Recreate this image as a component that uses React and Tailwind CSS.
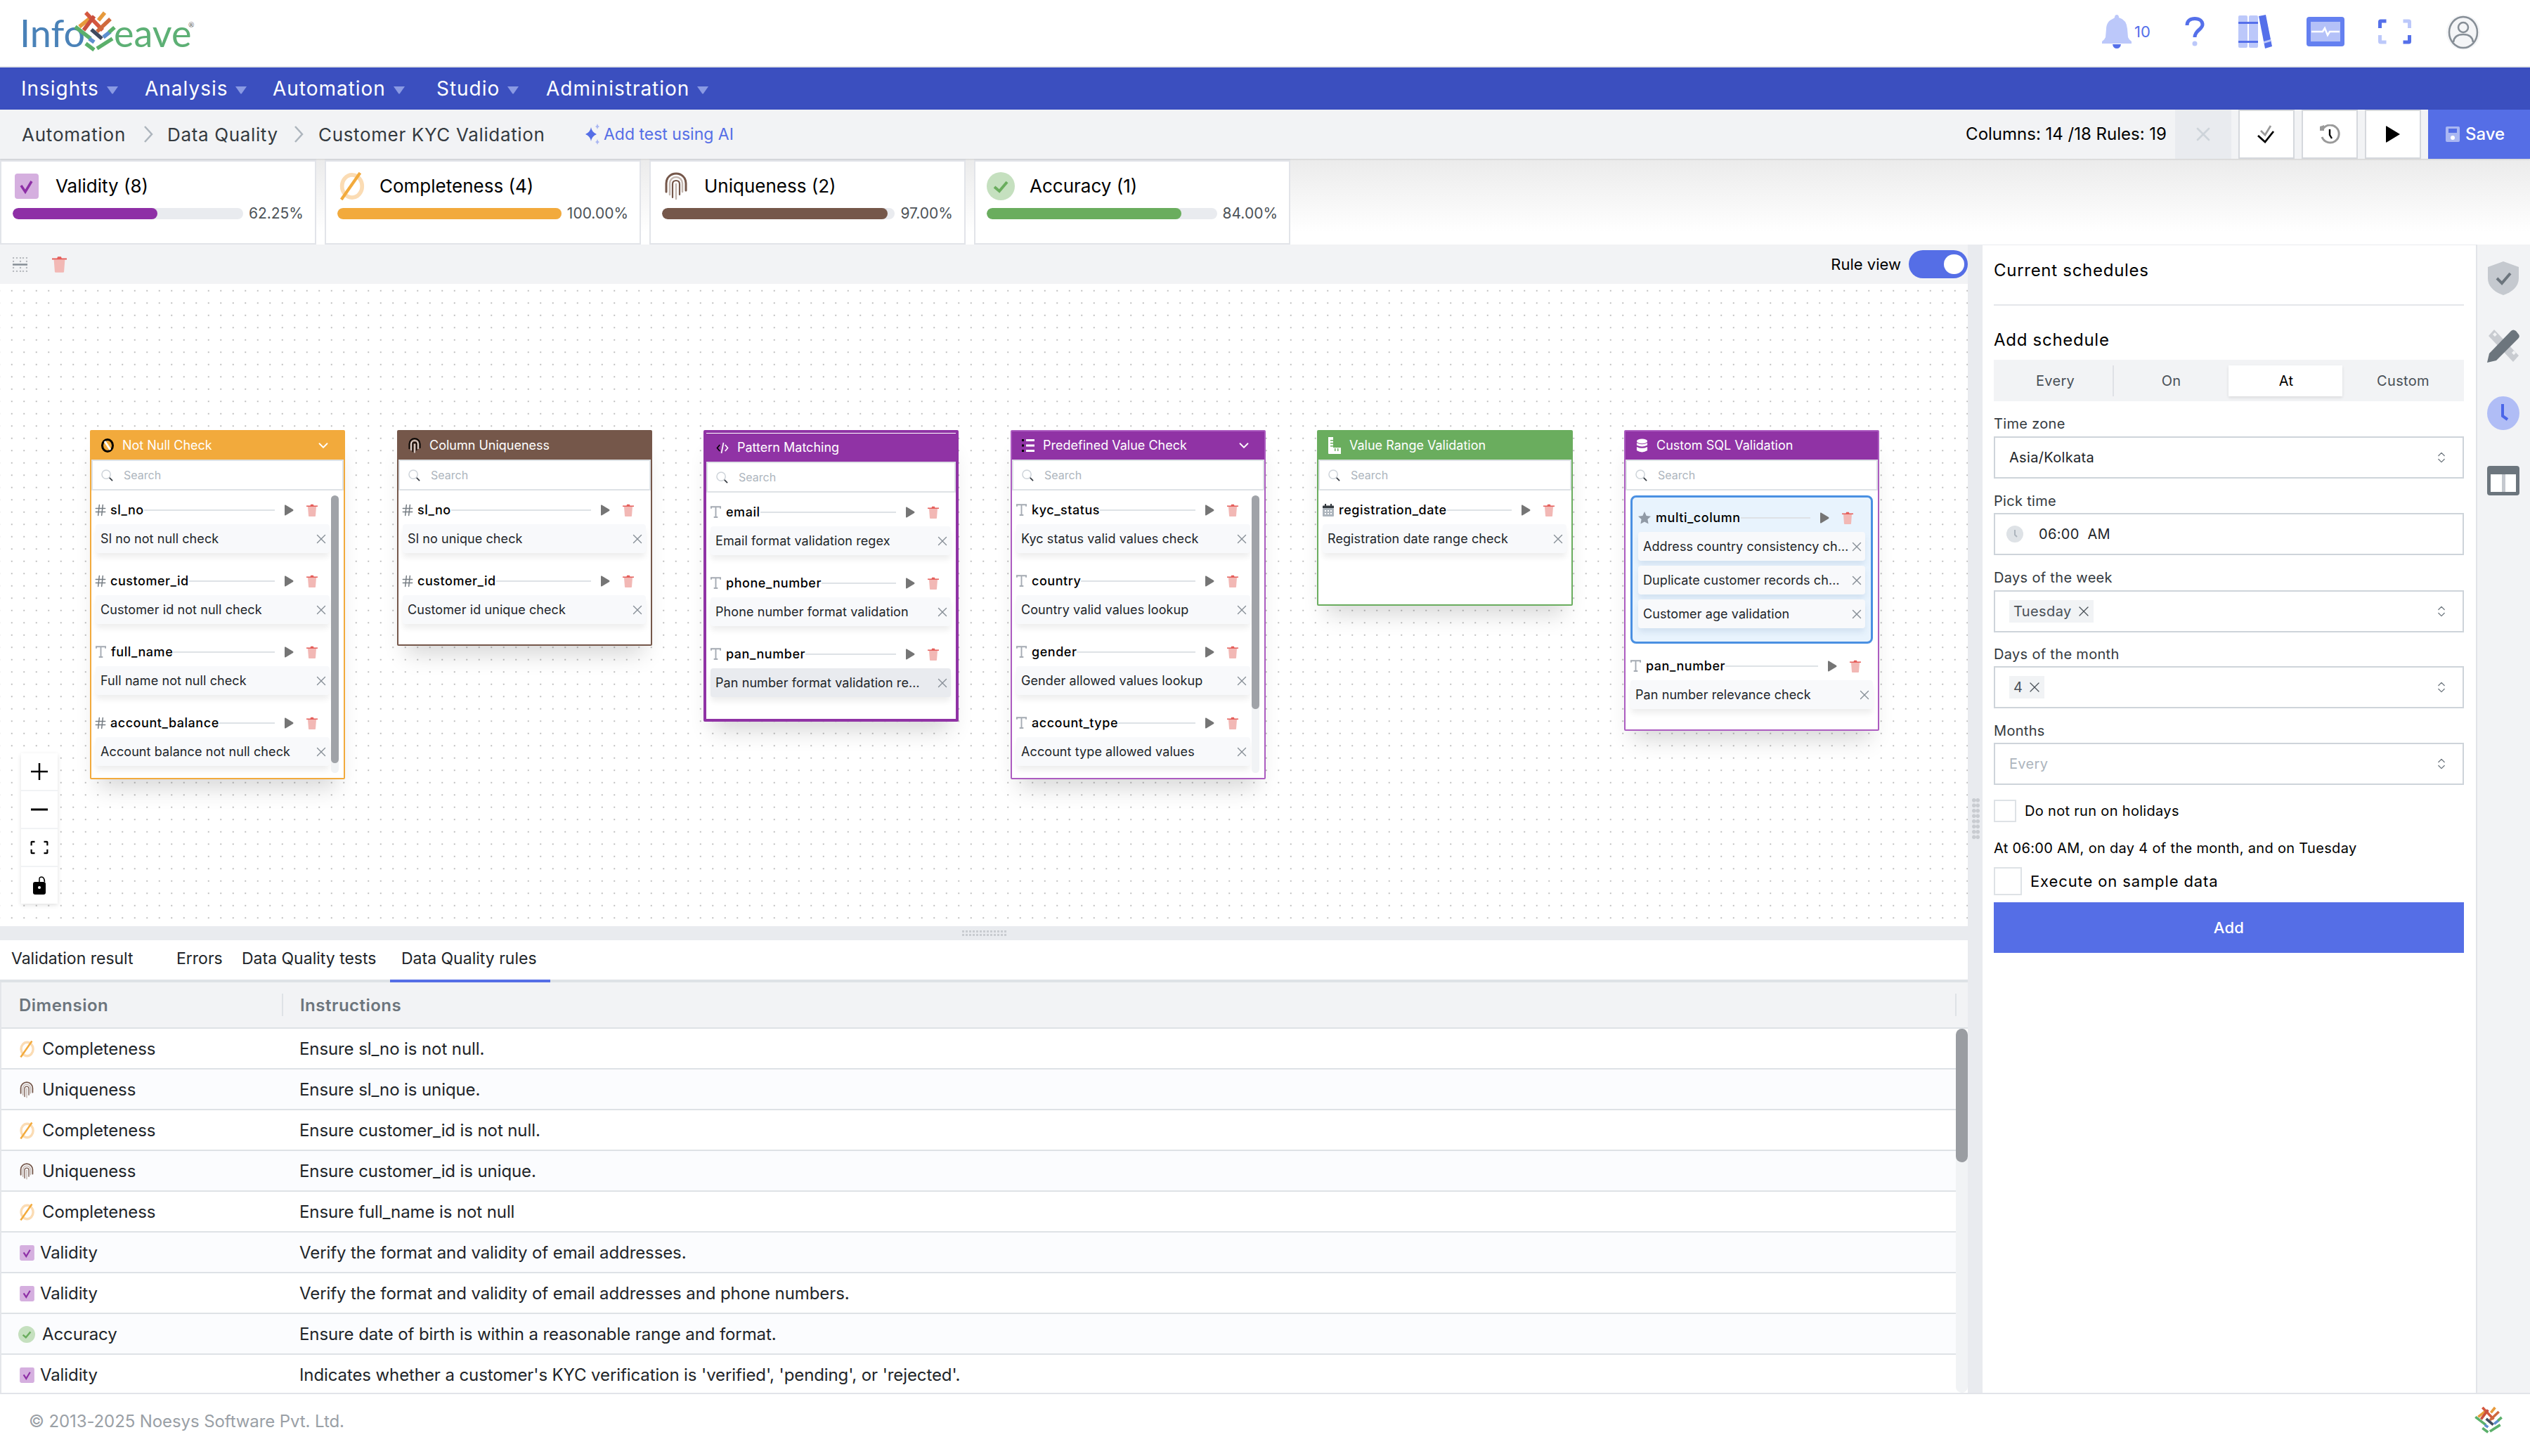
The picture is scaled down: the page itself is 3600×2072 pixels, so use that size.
import { ChevronsUpDown, Hash, X, ChevronDown } from "lucide-react";

// shared colours live in the class names, this app only uses a few
const Trash = ({ className = "w-[16px] h-[18px]" }) => (
  <svg viewBox="0 0 16 18" className={className}>
    <path d="M2 4h12l-1 13.2q0 .8-1 .8H4q-1 0-1-.8z" fill="#f2b8b5" />
    <path d="M0 2.6h5.5L6.2 .8h3.6l.7 1.8H16V4H0z" fill="#e55f5b" />
  </svg>
);

const Play = ({ className = "w-[14px] h-[16px]", color = "#757575" }) => (
  <svg viewBox="0 0 14 16" className={className}>
    <path d="M1 1.2 Q1 0 2.2 .6L13 7q1 1 0 2L2.2 15.4Q1 16 1 14.8z" fill={color} />
  </svg>
);

const LetterT = () => (
  <svg viewBox="0 0 16 18" className="w-[15px] h-[17px] shrink-0" fill="none" stroke="#a5abb3" strokeWidth="2">
    <path d="M1 4V1.2h14V4M8 1.2V17M5 17h6" />
  </svg>
);

const CalendarMini = () => (
  <svg viewBox="0 0 16 18" className="w-[16px] h-[18px] shrink-0">
    <rect x="0" y="6" width="16" height="12" rx="1" fill="#adb5bd" />
    <path d="M0 6V3.5Q0 2.5 1 2.5h2V0h2v2.5h6V0h2v2.5h2q1 0 1 1V6z" fill="#343a40" />
    <path d="M3 9h2v2H3zM7 9h2v2H7zM11 9h2v2h-2zM3 13h2v2H3zM7 13h2v2H7zM11 13h2v2h-2z" fill="#fff" />
  </svg>
);

const Star = () => (
  <svg viewBox="0 0 20 20" className="w-[18px] h-[18px] shrink-0">
    <path d="M10 0l3 6.6 7 .9-5.1 4.8 1.3 7.2L10 16l-6.2 3.5 1.3-7.2L0 7.500l7-.9z" fill="#909aa6" />
  </svg>
);

const SearchIcon = () => (
  <svg viewBox="0 0 18 18" className="w-[17px] h-[17px] shrink-0" fill="none">
    <circle cx="7.500" cy="7.500" r="6.500" stroke="#ced4da" strokeWidth="1.6" />
    <path d="M12.500 12.500L17 17" stroke="#343a40" strokeWidth="1.800" />
  </svg>
);

const Fingerprint = ({ className, outer = "#75574a", inner = "#c4b7b0" }) => (
  <svg viewBox="0 0 32 40" className={className} fill="none" strokeLinecap="round">
    <path d="M2 28V16C2 8 8 2 16 2s14 6 14 14v10" stroke={outer} strokeWidth="3" />
    <path d="M7 32V16c0-5 4-9 9-9s9 4 9 9v12" stroke={inner} strokeWidth="2.500" />
    <path d="M11 36V17c0-3 2-5 5-5s5 2 5 5v15" stroke={outer} strokeWidth="2.200" />
    <path d="M16 38V17" stroke={inner} strokeWidth="2.400" />
  </svg>
);

const NoNull = ({ className }) => (
  <svg viewBox="0 0 40 42" className={className} fill="none">
    <ellipse cx="21" cy="21" rx="15" ry="17" stroke="#fbdcb4" strokeWidth="6" />
    <path d="M33 1L5 41" stroke="#f2aa3c" strokeWidth="4.500" />
  </svg>
);

const CheckBoxDuo = ({ className }) => (
  <svg viewBox="0 0 34 36" className={className}>
    <rect width="34" height="36" rx="4" fill="#d5afdf" />
    <path d="M9 17l6 9 9-15" fill="none" stroke="#8e2fa6" strokeWidth="3.500" />
  </svg>
);

const CircleCheck = ({ className }) => (
  <svg viewBox="0 0 40 40" className={className}>
    <circle cx="20" cy="20" r="20" fill="#c5e0bf" />
    <path d="M11 21l7 6 11-13" fill="none" stroke="#6aad5e" strokeWidth="4" />
  </svg>
);

const Weave = ({ className }) => (
  <svg viewBox="0 0 60 60" className={className} fill="none" strokeWidth="5.500">
    <path d="M23 11L8 23" stroke="#e79a3c" />
    <path d="M44 3L35 14" stroke="#e79a3c" />
    <path d="M17 3L41 28" stroke="#d4573f" />
    <path d="M52 12L33 30" stroke="#cf6a3d" />
    <path d="M29 8L14 28" stroke="#c94f3e" />
    <path d="M2 23L24 40" stroke="#5bb06b" />
    <path d="M25 27L40 40" stroke="#3f4a5e" />
    <path d="M52 30L42 38" stroke="#5d8fcf" />
    <path d="M58 24L50 31" stroke="#5bb06b" />
    <path d="M22 40L29 45" stroke="#5d8fcf" />
    <path d="M17 47L29 56" stroke="#5bb06b" />
    <path d="M55 40L33 54" stroke="#5bb06b" />
  </svg>
);

const Caret = () => (
  <svg viewBox="0 0 18 12" className="w-[18px] h-[12px] mt-[4px]">
    <path d="M1 1h16l-7 10q-1 1-2 0z" fill="#8a9ae3" />
  </svg>
);

const Crumb = () => (
  <svg viewBox="0 0 14 26" className="w-[14px] h-[26px]" fill="none" stroke="#adb5bd" strokeWidth="2.500">
    <path d="M2 2l10 11L2 24" />
  </svg>
);

const FocusCorners = ({ className, a, b, width = 5 }) => (
  <svg viewBox="0 0 48 36" className={className} fill="none" strokeWidth={width}>
    <path d="M3 13V4Q3 3 4 3h8" stroke={a} />
    <path d="M36 3h8q1 0 1 1v9" stroke={b} />
    <path d="M3 23v9q0 1 1 1h8" stroke={b} />
    <path d="M36 33h8q1 0 1-1v-9" stroke={a} />
  </svg>
);

const HeaderIcons = () => (
  <div className="ml-auto h-full relative w-[680px]">
    <svg viewBox="0 0 42 48" className="absolute left-[71px] top-[21px] w-[42px] h-[48px]">
      <path d="M21 0q3 0 3 4 11 3 12 16l1 12q1 3 5 6v3H0v-3q4-3 5-6l1-12C7 7 15 7 18 4q0-4 3-4z" fill="#bcc8fa" />
      <path d="M15 42h12q-1 6-6 6t-6-6z" fill="#5570ea" />
    </svg>
    <span className="absolute left-[117px] top-[32px] text-[22px] leading-[26px] text-[#5570ea]">10</span>
    <svg viewBox="0 0 28 42" className="absolute left-[189px] top-[24px] w-[28px] h-[42px]" fill="none">
      <path d="M3 12C3 5 8 2.500 14 2.500 21 2.500 25 6 25 11 25 18 14 19 14 29" stroke="#5570ea" strokeWidth="5" />
      <circle cx="14" cy="38" r="3.500" fill="#bcc8fa" />
    </svg>
    <svg viewBox="0 0 49 48" className="absolute left-[265px] top-[21px] w-[49px] h-[48px]">
      <rect x="0" y="1" width="13" height="46" rx="2" fill="#bcc8fa" />
      <rect x="15" y="1" width="13" height="46" rx="2" fill="#bcc8fa" />
      <path d="M0 10h28v3H0zM0 37h28v3H0z" fill="#5570ea" />
      <path d="M29 2l10-2 9 45-10 3z" fill="#5570ea" />
      <path d="M36 38l10-3v3l-10 3z" fill="#bcc8fa" />
    </svg>
    <svg viewBox="0 0 54 42" className="absolute left-[362px] top-[24px] w-[54px] h-[42px]">
      <rect width="54" height="42" rx="4" fill="#6480f0" />
      <rect x="6" y="7" width="42" height="28" fill="#b4c1f8" />
      <path d="M7 21h16l3-5 4 10 3-5h14" fill="none" stroke="#fff" strokeWidth="2.500" />
    </svg>
    <FocusCorners className="absolute left-[463px] top-[27px] w-[49px] h-[36px]" a="#5570ea" b="#bcc8fa" />
    <svg viewBox="0 0 48 50" className="absolute left-[561px] top-[21px] w-[48px] h-[50px]" fill="none">
      <ellipse cx="24" cy="25" rx="24" ry="25" fill="#f4f5f7" />
      <ellipse cx="24" cy="25" rx="20" ry="22" stroke="#868e96" strokeWidth="2.500" />
      <circle cx="24" cy="18" r="7" stroke="#868e96" strokeWidth="2.500" />
      <path d="M10 39c1-9 7-11 14-11s13 2 14 11" stroke="#868e96" strokeWidth="2.500" />
    </svg>
  </div>
);

const nav = [
  { label: "Insights", gap: "w-[176px]" },
  { label: "Analysis", gap: "w-[182px]" },
  { label: "Automation", gap: "w-[233px]" },
  { label: "Studio", gap: "w-[156px]" },
  { label: "Administration", gap: "" },
];

const summaries = [
  {
    label: "Validity (8)",
    pct: "62.25%",
    card: "w-[450px]",
    iconBox: <CheckBoxDuo className="w-[34px] h-[36px] ml-[3px]" />,
    fill: "w-[206px] bg-[#8e2fa6]",
    textGap: "ml-[24px]",
  },
  {
    label: "Completeness (4)",
    pct: "100.00%",
    card: "w-[450px]",
    iconBox: <NoNull className="w-[40px] h-[40px]" />,
    fill: "w-[322px] bg-[#f2aa3c]",
    textGap: "ml-[20px]",
  },
  {
    label: "Uniqueness (2)",
    pct: "97.00%",
    card: "w-[450px]",
    iconBox: <Fingerprint className="w-[40px] h-[40px]" />,
    fill: "w-[321px] bg-[#75574a]",
    textGap: "ml-[20px]",
  },
  {
    label: "Accuracy (1)",
    pct: "84.00%",
    card: "w-[450px]",
    iconBox: <CircleCheck className="w-[40px] h-[40px]" />,
    fill: "w-[277px] bg-[#6aad5e]",
    textGap: "ml-[21px]",
  },
];

const SummaryCard = ({ item }) => (
  <div className={`${item.card} h-[122px] bg-white border-2 border-[#e2e4e9] border-t-4 px-[16px] pt-[13px]`}>
    <div className="flex items-center h-[44px]">
      {item.iconBox}
      <span className={`${item.textGap} text-[26px] leading-[32px] text-black`}>{item.label}</span>
    </div>
    <div className="flex items-center mt-[3px]">
      <div className="flex-1 h-[16px] rounded-full bg-[#e9ebef] overflow-hidden">
        <div className={`h-full rounded-full ${item.fill}`} />
      </div>
      <span className="ml-[8px] text-[21px] leading-[28px] text-[#4d5358]">{item.pct}</span>
    </div>
  </div>
);

const hash = <Hash className="w-[20px] h-[20px] -mx-[3px] shrink-0 text-[#757c83]" strokeWidth={1.8} />;
const letter = <LetterT />;

const nodes = [
  {
    pos: "left-[128px] top-[208px] w-[363px] h-[497px]",
    border: "border-2 border-[#f2aa3c]",
    head: "bg-[#f2aa3c]",
    title: "Not Null Check",
    chevron: true,
    scroll: "h-[381px]",
    icon: (
      <svg viewBox="0 0 18 20" className="w-[18px] h-[20px]" fill="none">
        <ellipse cx="9" cy="10" rx="7.500" ry="8.500" stroke="#000" strokeWidth="3" />
        <path d="M5 4l8 12" stroke="#fff" strokeWidth="3" />
      </svg>
    ),
    groups: [
      { icon: hash, name: "sl_no", rules: ["Sl no not null check"] },
      { icon: hash, name: "customer_id", rules: ["Customer id not null check"] },
      { icon: letter, name: "full_name", rules: ["Full name not null check"] },
      { icon: hash, name: "account_balance", rules: ["Account balance not null check"] },
    ],
  },
  {
    pos: "left-[565px] top-[208px] w-[363px] h-[307px]",
    border: "border-2 border-[#75574a]",
    head: "bg-[#75574a]",
    title: "Column Uniqueness",
    icon: <Fingerprint className="w-[18px] h-[22px]" outer="#000" inner="#fff" />,
    groups: [
      { icon: hash, name: "sl_no", rules: ["Sl no unique check"] },
      { icon: hash, name: "customer_id", rules: ["Customer id unique check"] },
    ],
  },
  {
    pos: "left-[1001px] top-[208px] w-[363px] h-[415px]",
    border: "border-4 border-[#9033a5]",
    head: "bg-[#9033a5] mt-[1px]",
    title: "Pattern Matching",
    icon: (
      <svg viewBox="0 0 24 22" className="w-[23px] h-[21px]" fill="none" strokeWidth="2.200">
        <path d="M7 5l-5 6 5 6" stroke="#000" />
        <path d="M14 1L10 21" stroke="#fff" />
        <path d="M17 5l5 6-5 6" stroke="#fff" />
      </svg>
    ),
    groups: [
      { icon: letter, name: "email", rules: ["Email format validation regex"] },
      { icon: letter, name: "phone_number", rules: ["Phone number format validation"] },
      { icon: letter, name: "pan_number", rules: ["Pan number format validation re…"], active: true },
    ],
  },
  {
    pos: "left-[1438px] top-[208px] w-[363px] h-[497px]",
    border: "border-2 border-[#ac5cc0]",
    head: "bg-[#9033a5]",
    title: "Predefined Value Check",
    chevron: true,
    scroll: "h-[304px]",
    icon: (
      <svg viewBox="0 0 18 20" className="w-[18px] h-[20px]">
        <path d="M0 1h3v3H0zM0 8.500h3v3H0zM0 16h3v3H0z" fill="#000" />
        <path d="M6 1h12v3H6zM6 8.500h12v3H6zM6 16h12v3H6z" fill="#fff" />
      </svg>
    ),
    groups: [
      { icon: letter, name: "kyc_status", rules: ["Kyc status valid values check"] },
      { icon: letter, name: "country", rules: ["Country valid values lookup"] },
      { icon: letter, name: "gender", rules: ["Gender allowed values lookup"] },
      { icon: letter, name: "account_type", rules: ["Account type allowed values"] },
    ],
  },
  {
    pos: "left-[1874px] top-[208px] w-[364px] h-[250px]",
    border: "border-2 border-[#6aad5e]",
    head: "bg-[#6aad5e]",
    title: "Value Range Validation",
    icon: (
      <svg viewBox="0 0 18 26" className="w-[18px] h-[26px]">
        <path d="M0 1h7v15h11v9H1q-1 0-1-1z" fill="#fff" />
        <path d="M3 5h4v1.500H3zM3 9h4v1.500H3zM3 13h4v1.500H3zM9 17v4h1.500v-4zM13 17v4h1.500v-4z" fill="#6aad5e" />
      </svg>
    ),
    groups: [{ icon: <CalendarMini />, name: "registration_date", rules: ["Registration date range check"] }],
  },
];

const ColumnRow = ({ icon, name }) => (
  <div className="flex items-center h-[41px] pr-[17px]">
    {icon}
    <span className="ml-[7px] text-[18px] font-medium text-black whitespace-nowrap tracking-[0.03em]">{name}</span>
    <div className="flex-1 h-[2px] bg-[#dee2e6]" />
    <Play className="w-[14px] h-[16px] ml-[13px] shrink-0" />
    <Trash className="w-[16px] h-[18px] ml-[18px] shrink-0" />
  </div>
);

const RuleCard = ({ text, active, shadow = "shadow-[0_7px_8px_-1px_rgba(0,0,0,0.07)]" }) => (
  <div className={`flex items-center h-[41px] rounded-[4px] pl-[7px] pr-[1px] ${active ? "bg-[#e9ebef]" : "bg-[#f8f9fb]"} ${shadow}`}>
    <span className="flex-1 min-w-0 whitespace-nowrap overflow-hidden text-[18px] leading-[24px] text-[#212529] tracking-[0.005em]">{text}</span>
    <X className="w-[22px] h-[22px] shrink-0 text-[#868e96]" strokeWidth={1.5} />
  </div>
);

const NodeShell = ({ node, children }) => (
  <div className={`absolute bg-white ${node.pos} ${node.border} rounded-[2px] shadow-[0_24px_30px_-12px_rgba(0,0,0,0.16)] flex flex-col`}>
    <div className={`flex items-center h-[40px] shrink-0 pl-[14px] pr-[18px] ${node.head}`}>
      <span className="w-[18px] flex justify-center shrink-0">{node.icon}</span>
      <span className="ml-[12px] text-[18px] leading-[24px] text-white whitespace-nowrap">{node.title}</span>
      {node.chevron && <ChevronDown className="ml-auto w-[22px] h-[22px] text-white" strokeWidth={2} />}
    </div>
    <div className="flex items-center h-[44px] shrink-0 border-2 border-[#dee2e6] pl-[12px]">
      <SearchIcon />
      <span className="ml-[15px] text-[16px] text-[#adb5bd]">Search</span>
    </div>
    {children}
  </div>
);

const RuleNode = ({ node }) => (
  <NodeShell node={node}>
    <div className="relative flex-1 pt-[7px] pl-[6px] pr-[7px]">
      <div className={node.scroll ? "pr-[13px]" : ""}>
        {node.groups.map((g) => (
          <div key={g.name} className="mb-[19px]">
            <ColumnRow icon={g.icon} name={g.name} />
            {g.rules.map((r) => (
              <RuleCard key={r} text={r} active={g.active} />
            ))}
          </div>
        ))}
      </div>
      {node.scroll && (
        <div className="absolute right-[7px] top-[7px] bottom-[9px] w-[11px] bg-[#f1f3f5] rounded-full">
          <div className={`w-full rounded-full bg-[#a0a3a8] ${node.scroll}`} />
        </div>
      )}
    </div>
  </NodeShell>
);

const SqlNode = () => {
  const node = {
    pos: "left-[2311px] top-[208px] w-[363px] h-[428px]",
    border: "border-2 border-[#ac5cc0]",
    head: "bg-[#9033a5]",
    title: "Custom SQL Validation",
    icon: (
      <svg viewBox="0 0 18 22" className="w-[17px] h-[21px]" fill="#fff">
        <ellipse cx="9" cy="4" rx="8" ry="3.500" />
        <path d="M1 6.500q8 4 16 0V10q-8 4-16 0zM1 12.500q8 4 16 0V18q-8 5-16 0z" />
      </svg>
    ),
  };
  const soft = "shadow-[0_6px_8px_-1px_rgba(40,90,150,0.12)]";
  return (
    <NodeShell node={node}>
      <div className="flex-1 pt-[7px] pl-[7px] pr-[7px]">
        <div className="rounded-[8px] border-[3px] border-[#4a90e2] bg-[#e8f3fd] h-[211px] pt-[8px] px-[8px]">
          <ColumnRow icon={<Star />} name="multi_column" />
          <div className="flex flex-col gap-[7px]">
            <RuleCard text="Address country consistency ch…" shadow={soft} />
            <RuleCard text="Duplicate customer records ch…" shadow={soft} />
            <RuleCard text="Customer age validation" shadow={soft} />
          </div>
        </div>
        <div className="mt-[11px]">
          <ColumnRow icon={<LetterT />} name="pan_number" />
          <RuleCard text="Pan number relevance check" />
        </div>
      </div>
    </NodeShell>
  );
};

const zoomButtons = [
  <svg key="plus" viewBox="0 0 24 24" className="w-[24px] h-[24px]" fill="none" stroke="#000" strokeWidth="2.500"><path d="M12 0v24M0 12h24" /></svg>,
  <svg key="minus" viewBox="0 0 24 24" className="w-[24px] h-[24px]" fill="none" stroke="#000" strokeWidth="3"><path d="M0 12h24" /></svg>,
  <FocusCorners key="focus" className="w-[26px] h-[24px]" a="#000" b="#000" width={4} />,
  <svg key="lock" viewBox="0 0 20 26" className="w-[20px] h-[26px]">
    <path d="M10 8V3.500C10 1 13 .5 15 1.500 17 3 17.500 5 17.500 8" fill="none" stroke="#000" strokeWidth="1.500" />
    <rect x="1" y="8" width="18" height="18" rx="3" fill="#000" />
    <circle cx="10" cy="16" r="2" fill="#fff" />
  </svg>,
];

const tabs = [
  { label: "Validation result", cls: "w-[235px]" },
  { label: "Errors", cls: "w-[93px]" },
  { label: "Data Quality tests", cls: "w-[227px]" },
  { label: "Data Quality rules", cls: "" },
];

const dimIcon = {
  Completeness: <NoNull className="w-[24px] h-[24px]" />,
  Uniqueness: <Fingerprint className="w-[24px] h-[24px]" />,
  Validity: <CheckBoxDuo className="w-[21px] h-[22px]" />,
  Accuracy: <CircleCheck className="w-[24px] h-[24px]" />,
};

const rows = [
  ["Completeness", "Ensure sl_no is not null."],
  ["Uniqueness", "Ensure sl_no is unique."],
  ["Completeness", "Ensure customer_id is not null."],
  ["Uniqueness", "Ensure customer_id is unique."],
  ["Completeness", "Ensure full_name is not null"],
  ["Validity", "Verify the format and validity of email addresses."],
  ["Validity", "Verify the format and validity of email addresses and phone numbers."],
  ["Accuracy", "Ensure date of birth is within a reasonable range and format."],
  ["Validity", "Indicates whether a customer's KYC verification is 'verified', 'pending', or 'rejected'."],
];

const Field = ({ label, mt, inputMt, children }) => (
  <>
    <div className={`${mt} h-[24px] flex items-center text-[20px] text-[#343a40]`}>{label}</div>
    <div className={`${inputMt} h-[60px] border-2 border-[#ced4da] flex items-center pl-[20px] pr-[20px] text-[20px] text-[#212529]`}>
      {children}
    </div>
  </>
);

const Chevrons = () => <ChevronsUpDown className="ml-auto w-[20px] h-[20px] text-[#6c757d]" strokeWidth={1.5} />;

const Chip = ({ text }) => (
  <span className="flex items-center h-[32px] px-[6px] bg-[#f1f3f5] text-[20px] text-[#495057] tracking-[0.02em]">
    {text}
    <X className="ml-[5px] w-[24px] h-[24px] -mr-[4px] text-[#495057]" strokeWidth={1.2} />
  </span>
);

const SchedulePanel = () => (
  <div className="w-[702px] shrink-0 bg-white mt-[1px] pl-[16px] pr-[17px] tracking-[0.02em]">
    <div className="h-[72px] flex items-center text-[24px] text-black tracking-[0.03em]">Current schedules</div>
    <div className="mt-[12px] h-[2px] bg-[#e4e6ea]" />
    <div className="mt-[35px] h-[27px] flex items-center text-[24px] text-black tracking-[0.03em]">Add schedule</div>
    <div className="mt-[15px] h-[59px] bg-[#f2f3f5] flex items-center text-[20px] text-[#495057]">
      <div className="w-[171px] h-[44px] flex items-center justify-center border-r-2 border-[#dfe1e6] pl-[6px]">Every</div>
      <div className="w-[163px] flex items-center justify-center">On</div>
      <div className="w-[162px] h-[44px] flex items-center justify-center bg-white text-black shadow-[0_2px_4px_rgba(0,0,0,0.1)] pl-[2px]">At</div>
      <div className="flex-1 flex items-center justify-center">Custom</div>
    </div>
    <Field label="Time zone" mt="mt-[20px]" inputMt="mt-[6px]">
      <span>Asia/Kolkata</span>
      <Chevrons />
    </Field>
    <Field label="Pick time" mt="mt-[20px]" inputMt="mt-[5px]">
      <svg viewBox="0 0 24 24" className="w-[24px] h-[24px] -ml-[4px]">
        <circle cx="12" cy="12" r="12" fill="#dee2e6" />
        <path d="M12 6v7l3 3" fill="none" stroke="#adb5bd" strokeWidth="2" />
      </svg>
      <span className="ml-[22px] whitespace-pre">06:00  AM</span>
    </Field>
    <Field label="Days of the week" mt="mt-[20px]" inputMt="mt-[6px]">
      <Chip text="Tuesday" />
      <Chevrons />
    </Field>
    <Field label="Days of the month" mt="mt-[19px]" inputMt="mt-[5px]">
      <Chip text="4" />
      <Chevrons />
    </Field>
    <Field label="Months" mt="mt-[20px]" inputMt="mt-[5px]">
      <span className="text-[#adb5bd]">Every</span>
      <Chevrons />
    </Field>
    <div className="mt-[21px] flex items-center">
      <div className="w-[32px] h-[32px] border-2 border-[#dee2e6]" />
      <span className="ml-[12px] text-[20px] text-black">Do not run on holidays</span>
    </div>
    <div className="mt-[23px] h-[28px] flex items-center text-[20px] text-black whitespace-nowrap">At 06:00 AM, on day 4 of the month, and on Tuesday</div>
    <div className="mt-[13px] flex items-center">
      <div className="w-[40px] h-[40px] border-2 border-[#dee2e6]" />
      <span className="ml-[12px] text-[22px] text-black tracking-[0.04em]">Execute on sample data</span>
    </div>
    <button className="mt-[10px] w-full h-[72px] bg-[#556ee6] text-white text-[22px] font-medium">Add</button>
  </div>
);

const Rail = () => (
  <div className="flex-1 bg-[#f2f3f5] border-l-2 border-[#e2e4e9] flex flex-col items-center pt-[24px] pr-[2px] gap-[48px]">
    <div className="h-[48px] flex items-center">
      <svg viewBox="0 0 44 48" className="w-[44px] h-[48px]">
        <path d="M22 0l22 8v16c0 12-10 20-22 24C10 44 0 36 0 24V8z" fill="#c5c9cf" />
        <path d="M13 24l7 7 12-14" fill="none" stroke="#6c757d" strokeWidth="4" />
      </svg>
    </div>
    <div className="h-[48px] flex items-center">
      <svg viewBox="0 0 46 48" className="w-[46px] h-[48px]">
        <path d="M2 10l8-9 35 37-8 9z" fill="#c9ccd1" />
        <path d="M8 8l3-3 3 3-3 3zM35 34l3-3 3 3-3 3z" fill="#f2f3f5" />
        <path d="M0 48l3-13L34 3q3-3 7 0l4 5q2 3-1 6L13 45z" fill="#6c757d" />
      </svg>
    </div>
    <div className="h-[48px] flex items-center">
      <svg viewBox="0 0 46 48" className="w-[46px] h-[48px]">
        <ellipse cx="23" cy="24" rx="23" ry="24" fill="#b0bdf6" />
        <path d="M22 11v17l7 5" fill="none" stroke="#4a66e8" strokeWidth="4" />
      </svg>
    </div>
    <div className="h-[48px] flex items-center">
      <svg viewBox="0 0 46 42" className="w-[46px] h-[42px]">
        <rect width="46" height="42" rx="4" fill="#6c757d" />
        <rect x="5" y="12" width="36" height="25" fill="#fff" />
        <rect x="21" y="12" width="5" height="25" fill="#c5c9cf" />
      </svg>
    </div>
  </div>
);

export default function App() {
  return (
    <div className="w-[3600px] h-[2072px] overflow-hidden bg-white font-['Inter',sans-serif] flex flex-col">
      {/* top bar */}
      <header className="h-[96px] shrink-0 bg-white border-b-2 border-[#e4e6ea] flex items-start pl-[28px]">
        <div className="relative h-[94px] w-[260px] flex items-end pb-[20px] text-[54px] leading-[54px] font-['Lato',sans-serif]">
          <span className="w-[134px] text-[#4a82b8]">Info</span>
          <span className="text-[#5db075]">eave</span>
          <Weave className="absolute left-[77px] top-[15px] w-[60px] h-[60px]" />
          <span className="absolute left-[240px] top-[30px] text-[10px] leading-[10px] text-[#555]">®</span>
        </div>
        <HeaderIcons />
      </header>

      <nav className="h-[60px] shrink-0 bg-[#3b4fbf] flex items-center pl-[30px] text-[28px] text-white tracking-[0.035em]">
        {nav.map((n) => (
          <div key={n.label} className={`flex items-center gap-[10px] ${n.gap}`}>
            <span>{n.label}</span>
            <Caret />
          </div>
        ))}
      </nav>

      {/* breadcrumb and actions */}
      <div className="h-[70px] shrink-0 bg-[#f2f3f5] flex items-center pl-[31px] relative z-10 shadow-[0_1px_2px_rgba(0,0,0,0.12)]">
        <span className="w-[173px] text-[26px] text-[#343a40] tracking-[0.03em]">Automation</span>
        <Crumb />
        <span className="ml-[20px] w-[180px] text-[26px] text-[#343a40] tracking-[0.025em]">Data Quality</span>
        <Crumb />
        <span className="ml-[21px] w-[379px] text-[26px] text-[#343a40] tracking-[0.025em]">Customer KYC Validation</span>
        <svg viewBox="0 0 22 30" className="w-[22px] h-[30px]">
          <path d="M9 5q1 7 8 10-7 3-8 10-1-7-8-10 7-3 8-10z" fill="#556ee6" />
          <path d="M18 0q.5 3 3 4-2.500 1-3 4-.5-3-3-4 2.500-1 3-4zM18 22q.5 3 3 4-2.500 1-3 4-.5-3-3-4 2.500-1 3-4z" fill="#aab7f2" />
        </svg>
        <span className="ml-[5px] text-[23px] text-[#556ee6]">Add test using AI</span>
        <span className="ml-auto text-[24px] text-black whitespace-nowrap">Columns: 14 /18 Rules: 19</span>
        <div className="ml-[12px] w-[80px] h-full bg-[#e9ebef] flex items-center justify-center">
          <X className="w-[32px] h-[32px] text-[#ced4da]" strokeWidth={2} />
        </div>
        <div className="ml-[10px] w-[80px] h-full bg-white border-2 border-[#d5d8dd] flex items-center justify-center">
          <svg viewBox="0 0 26 26" className="w-[26px] h-[26px]" fill="none" strokeWidth="2.800">
            <path d="M5 8l6 6 8-13" stroke="#9a9a9a" />
            <path d="M1 15l10 9 12-15" stroke="#000" />
          </svg>
        </div>
        <div className="ml-[10px] w-[80px] h-full bg-white border-2 border-[#d5d8dd] flex items-center justify-center">
          <svg viewBox="0 0 30 28" className="w-[30px] h-[28px]" fill="none">
            <path d="M5 7a12.500 12.500 0 1 1 -1 11" stroke="#9a9a9a" strokeWidth="3" />
            <path d="M1 3l6-2v8H1z" fill="#9a9a9a" />
            <path d="M15 7v8l3 5" stroke="#000" strokeWidth="2.400" />
          </svg>
        </div>
        <div className="ml-[10px] w-[80px] h-full bg-white border-2 border-[#d5d8dd] flex items-center justify-center">
          <svg viewBox="0 0 20 24" className="w-[20px] h-[24px]"><path d="M0 1Q0 0 1 .5L20 12 1 23.500Q0 24 0 23z" fill="#000" /></svg>
        </div>
        <div className="ml-[10px] w-[145px] h-full bg-[#556ee6] flex items-center pl-[25px]">
          <svg viewBox="0 0 20 22" className="w-[20px] h-[22px]">
            <path d="M2 0h16q2 0 2 2v18q0 2-2 2H2q-2 0-2-2V2q0-2 2-2z" fill="#aab7f2" />
            <path d="M4 3h12v6H4z" fill="#556ee6" />
            <circle cx="10" cy="16" r="3" fill="#fff" />
          </svg>
          <span className="ml-[8px] text-[24px] font-medium text-white">Save</span>
        </div>
      </div>

      {/* dimension summary */}
      <div className="h-[122px] shrink-0 bg-[linear-gradient(180deg,#ebebeb_0%,#ffffff_85%)] flex items-start gap-[12px]">
        {summaries.map((s) => (
          <SummaryCard key={s.label} item={s} />
        ))}
      </div>

      <div className="flex-1 min-h-0 flex bg-[#e9ebef] border-b-2 border-[#e2e4e9]">
        <div className="w-[2800px] shrink-0 flex flex-col">
          <div className="h-[56px] shrink-0 bg-[#f2f3f5] flex items-center pl-[18px]">
            <svg viewBox="0 0 21 21" className="w-[21px] h-[21px]">
              <g fill="#b5b8bd">
                <circle cx="1" cy="1" r="1.200" /><circle cx="6" cy="1" r="1.200" /><circle cx="11" cy="1" r="1.200" /><circle cx="15" cy="1" r="1.200" /><circle cx="20" cy="1" r="1.200" />
                <circle cx="1" cy="6" r="1.200" /><circle cx="11" cy="6" r="1.200" /><circle cx="20" cy="6" r="1.200" />
                <circle cx="1" cy="15" r="1.200" /><circle cx="11" cy="15" r="1.200" /><circle cx="20" cy="15" r="1.200" />
                <circle cx="1" cy="20" r="1.200" /><circle cx="6" cy="20" r="1.200" /><circle cx="11" cy="20" r="1.200" /><circle cx="15" cy="20" r="1.200" /><circle cx="20" cy="20" r="1.200" />
              </g>
              <path d="M0 10.500h21" stroke="#868e96" strokeWidth="2.500" />
            </svg>
            <Trash className="ml-[35px] w-[21px] h-[24px]" />
            <span className="ml-auto text-[22px] text-black">Rule view</span>
            <div className="ml-[11px] w-[84px] h-[40px] rounded-full bg-[#556ee6] flex items-center justify-end pr-[5px]">
              <div className="w-[29px] h-[28px] rounded-full bg-white" />
            </div>
          </div>

          {/* rule canvas */}
          <div className="relative h-[914px] shrink-0 overflow-hidden bg-white bg-[radial-gradient(circle,#bdbdbd_1px,transparent_1.3px)] bg-[size:17.5px_17.5px] bg-[position:8px_1px]">
            {nodes.map((n) => (
              <RuleNode key={n.title} node={n} />
            ))}
            <SqlNode />
            <div className="absolute left-[30px] top-[668px] w-[52px] flex flex-col gap-[2px] bg-[#f1f3f5] shadow-[0_2px_6px_rgba(0,0,0,0.12)]">
              {zoomButtons.map((b) => (
                <div key={b.key} className="h-[52px] bg-white flex items-center justify-center">{b}</div>
              ))}
            </div>
          </div>

          <div className="h-[20px] shrink-0 bg-[#e9ebef] flex items-center justify-center">
            <div className="w-[64px] h-[10px] bg-[radial-gradient(circle,#c9ccd1_1.500px,transparent_2px)] bg-[size:5px_5px]" />
          </div>

          <div className="h-[60px] shrink-0 bg-white border-b-4 border-[#dee2e6] flex items-center pl-[16px] pb-[3px] text-[23px] text-[#212529] relative">
            {tabs.map((t) => (
              <span key={t.label} className={t.cls}>{t.label}</span>
            ))}
            <div className="absolute left-[555px] -bottom-[4px] w-[228px] h-[4px] bg-[#556ee6]" />
          </div>

          {/* rules table */}
          <div className="flex-1 min-h-0 bg-white border-l-2 border-[#e4e6ea] flex flex-col">
            <div className="h-[66px] shrink-0 bg-[#f2f3f5] border-b-2 border-[#dee2e6] flex items-center pt-[2px] text-[24px] font-semibold text-[#6c757d] tracking-[0.02em] relative pl-[25px]">
              <span className="w-[400px]">Dimension</span>
              <span>Instructions</span>
              <div className="absolute left-[399px] top-[16px] w-[2px] h-[32px] bg-[#dee2e6]" />
              <div className="absolute left-[2780px] top-[16px] w-[2px] h-[32px] bg-[#dee2e6]" />
            </div>
            <div className="relative flex-1 min-h-0 overflow-hidden">
              {rows.map(([dim, text], i) => (
                <div
                  key={i}
                  className={`h-[58px] border-b-2 border-[#dee2e6] mr-[17px] flex items-center pl-[24px] pt-[1px] text-[24px] text-[#212529] tracking-[-0.1px] ${i % 2 ? "bg-[#fbfcfe]" : "bg-white"}`}
                >
                  <div className="w-[400px] flex items-center">
                    <span className="w-[24px] flex justify-center">{dimIcon[dim]}</span>
                    <span className={dim === "Validity" ? "ml-[7px]" : "ml-[10px]"}>{dim}</span>
                  </div>
                  <span>{text}</span>
                </div>
              ))}
              <div className="absolute right-0 top-0 bottom-0 w-[17px] bg-[#f1f3f5] rounded-full">
                <div className="w-full h-[190px] rounded-full bg-[#9a9da2]" />
              </div>
            </div>
          </div>
        </div>

        {/* resize gutter */}
        <div className="w-[21px] shrink-0 relative">
          <div className="absolute left-[6px] top-[787px] w-[11px] h-[60px] bg-[radial-gradient(circle,#c9ccd1_2.500px,transparent_3px)] bg-[size:5.500px_7.500px]" />
        </div>

        <SchedulePanel />
        <Rail />
      </div>

      <footer className="h-[88px] shrink-0 bg-white flex items-center pl-[41px] pr-[39px]">
        <span className="text-[24px] text-[#9aa0a6] tracking-[-0.1px] -mt-[10px]">© 2013-2025 Noesys Software Pvt. Ltd.</span>
        <Weave className="ml-auto w-[40px] h-[40px] -mt-[14px]" />
      </footer>
    </div>
  );
}
